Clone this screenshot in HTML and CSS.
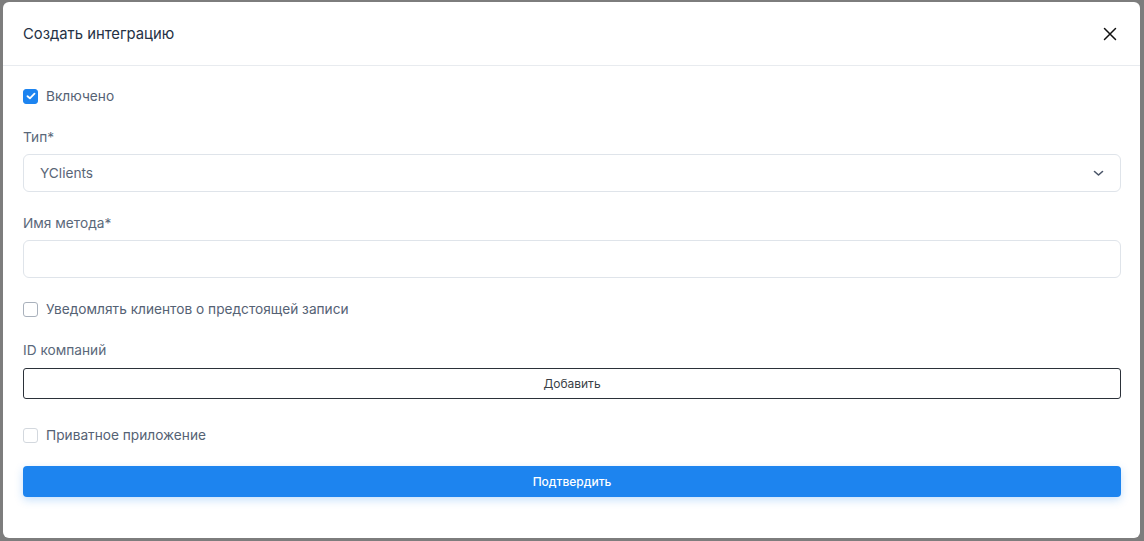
FILE: index.html
```html
<!DOCTYPE html>
<html lang="ru">
<head>
<meta charset="utf-8">
<title>Создать интеграцию</title>
<link rel="stylesheet" href="styles.css">
</head>
<body>
<div class="backdrop">
  <div class="modal">
    <div class="modal-header">
      <h2 class="modal-title">Создать интеграцию</h2>
      <button class="close" aria-label="Закрыть">
        <svg width="14" height="14" viewBox="0 0 14 14"><path d="M1.5 1.5 L12.5 12.5 M12.5 1.5 L1.5 12.5" stroke="#111" stroke-width="1.5" stroke-linecap="round"/></svg>
      </button>
    </div>
    <div class="modal-body">
      <label class="check first">
        <span class="box checked">
          <svg width="10" height="8" viewBox="0 0 10 8"><path d="M1.5 4.2 L3.9 6.3 L8.5 1.7" stroke="#fff" stroke-width="1.8" fill="none" stroke-linecap="round" stroke-linejoin="round"/></svg>
        </span>
        <span class="check-text">Включено</span>
      </label>

      <div class="label">Тип*</div>
      <div class="field select">
        <span class="value">YClients</span>
        <svg class="chev" width="11" height="7" viewBox="0 0 11 7"><path d="M1.5 1.5 L5.5 5 L9.5 1.5" stroke="#4a5568" stroke-width="1.6" fill="none" stroke-linecap="round" stroke-linejoin="round"/></svg>
      </div>

      <div class="label">Имя метода*</div>
      <div class="field"></div>

      <label class="check">
        <span class="box"></span>
        <span class="check-text">Уведомлять клиентов о предстоящей записи</span>
      </label>

      <div class="label">ID компаний</div>
      <button class="btn-outline">Добавить</button>

      <label class="check private">
        <span class="box disabled"></span>
        <span class="check-text">Приватное приложение</span>
      </label>

      <button class="btn-primary">Подтвердить</button>
    </div>
  </div>
</div>
</body>
</html>
```

FILE: styles.css
```css
* { box-sizing: border-box; }
html, body { margin: 0; padding: 0; }
body {
  background: #7d7d7d;
  font-family: Inter, "Noto Sans", sans-serif;
  width: 1144px;
  height: 541px;
  overflow: hidden;
}
.backdrop {
  padding: 2px 4px 3px 3px;
}
.modal {
  width: 1137px;
  height: 536px;
  background: #fff;
  border-radius: 6px;
  display: flex;
  flex-direction: column;
}
.modal-header {
  height: 64px;
  border-bottom: 1px solid #e8ebef;
  display: flex;
  align-items: center;
  justify-content: space-between;
  padding: 0 23px 0 20px;
}
.modal-title {
  margin: 0;
  font-size: 14.8px;
  font-weight: 400;
  color: #243145;
}
.close {
  border: 0;
  background: none;
  padding: 0;
  width: 14px;
  height: 14px;
  display: flex;
}
.modal-body {
  padding: 0 19px 0 20px;
  display: flex;
  flex-direction: column;
}
.check {
  display: flex;
  align-items: center;
  height: 20px;
  gap: 8px;
  margin-top: 21px;
}
.check.first { margin-top: 20px; }
.check.private { margin-top: 26px; }
.box {
  width: 15px;
  height: 15px;
  border: 1px solid #a9b1bc;
  border-radius: 3px;
  background: #fff;
  display: flex;
  align-items: center;
  justify-content: center;
  flex: none;
}
.box.checked {
  background: #1d84f0;
  border-color: #1d84f0;
}
.box.disabled { border-color: #d3d8de; }
.check-text {
  font-size: 13.7px;
  color: #556274;
}
.label {
  margin-top: 21px;
  height: 20px;
  line-height: 20px;
  font-size: 13.7px;
  color: #5a687a;
}
.field {
  margin-top: 7px;
  height: 38px;
  border: 1px solid #dfe4ea;
  border-radius: 6px;
  background: #fff;
}
.select {
  display: flex;
  align-items: center;
  justify-content: space-between;
  padding: 0 16px 0 16px;
}
.select .value {
  font-size: 13.7px;
  color: #5a6678;
}
.btn-outline {
  margin-top: 8px;
  height: 31px;
  border: 1px solid #2b3139;
  border-radius: 3px;
  background: #fff;
  font-family: Inter, "Noto Sans", sans-serif;
  font-size: 12px;
  color: #3a3f46;
  padding: 0;
}
.btn-primary {
  margin-top: 21px;
  height: 31px;
  border: 0;
  border-radius: 4px;
  background: #1d84ef;
  color: #fff;
  font-family: Inter, "Noto Sans", sans-serif;
  font-size: 12px;
  font-weight: 500;
  box-shadow: 0 3px 8px rgba(29, 132, 239, 0.25);
  padding: 0;
}
```
